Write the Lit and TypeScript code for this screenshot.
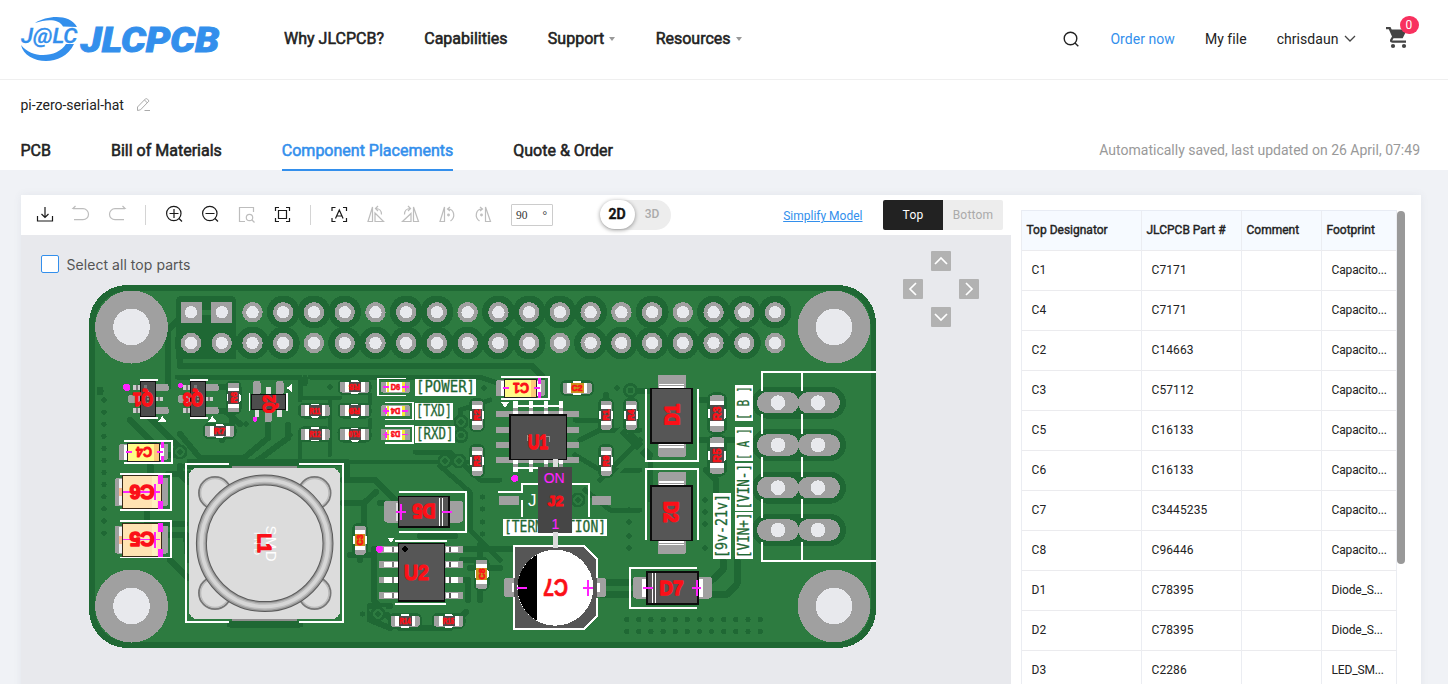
import { LitElement, html, svg, css } from "lit";
import { customElement } from "lit/decorators.js";

const DARK = "#1f6834";
const COPPER = "#2d7b40";
const PAD = "#a0a0a0";
const MAG = "#ff22ff";

const range = (n: number) => Array.from({ length: n }, (_, i) => i);

const label = (x: number, y: number, t: string, size: number, rot = 0, w?: number, weight = 0.8) => svg`
  <text class="ref" transform="translate(${x} ${y}) rotate(${rot})" y=${size * 0.36} font-size=${size}
    stroke-width=${weight} textLength=${w ?? size * 0.65 * t.length} lengthAdjust="spacingAndGlyphs">${t}</text>`;

const rect = (x: number, y: number, w: number, h: number, fill: string, r = 0) =>
  svg`<rect x=${x} y=${y} width=${w} height=${h} rx=${r} fill=${fill}></rect>`;

const silk = (d: string, w = 1.8) => svg`<path d=${d} fill="none" stroke="#fff" stroke-width=${w}></path>`;
const mag = (d: string, w = 1.8) => svg`<path d=${d} fill="none" stroke=${MAG} stroke-width=${w}></path>`;
const dark = (d: string, w = 6) => svg`<path d=${d} fill="none" stroke=${DARK} stroke-width=${w} stroke-linejoin="round" stroke-linecap="round"></path>`;
const light = (d: string, w = 4) => svg`<path d=${d} fill="none" stroke=${COPPER} stroke-width=${w} stroke-linejoin="round" stroke-linecap="round"></path>`;

const chip = (x: number, y: number, t: string, vertical = false, body = "#4c4c4c", flip = false, k = 1) => svg`
  <g transform="translate(${x} ${y}) rotate(${vertical ? -90 : 0}) scale(${k})">
    ${rect(-17, -8, 34, 16, DARK, 6)}
    ${rect(-14.5, -5.5, 29, 11, PAD, 1.5)}
    ${rect(-4, -7, 8, 14, "#fff", 1)}
    ${rect(-10, -5.3, 20, 10.6, "#fff")}
    ${rect(-6, -5.3, 12.5, 10.6, body)}
    ${label(0, 0, t, 8.5, flip ? 180 : 0, 11, 0.6)}
  </g>`;

const led = (y: number, t: string, swap: boolean) => svg`
  ${rect(381, y - 5.5, 29, 11, PAD, 1.5)}
  ${rect(386, y - 5, 19, 10, "#fff")}
  ${rect(386.5, y - 5, 2.5, 10, "#f4ea3a")}${rect(402, y - 5, 2.5, 10, "#f4ea3a")}
  ${label(395.5, y, t, 8.5, swap ? 180 : 0, 9.5, 0.6)}
  ${swap
    ? mag(`M383 ${y}h6M386 ${y - 3}v6M402 ${y}h6`)
    : mag(`M383 ${y}h6M402 ${y}h7M405.5 ${y - 3.5}v7`)}`;

const tag = (x: number, y: number, w: number, h: number, t: string) => svg`
  ${rect(x, y, w, h, "#fff")}
  <text class="silk-text" x=${x + 1} y=${y + 13.3} textLength=${w - 2} lengthAdjust="spacingAndGlyphs">${t}</text>`;

const vtag = (x: number, y: number, w: number, h: number, t: string) => svg`
  ${rect(x, y, w, h, "#fff")}
  <text class="silk-text" transform="translate(${x + w - 4} ${y + h - 1}) rotate(-90)" textLength=${h - 2} lengthAdjust="spacingAndGlyphs">${t}</text>`;

const tantalum = (y: number, t: string) => svg`
  ${silk(`M119.5 ${y - 18.2}H171.3V${y + 18}H119.5`)}
  ${rect(115, y - 14, 53, 28, PAD, 2)}
  ${rect(119, y - 13, 4, 26, "#f0f0f0")}${rect(119, y - 4, 3, 8, "#fbb98f")}
  <rect x="122.5" y=${y - 16.5} width="38.5" height="33" fill="#ffe3b3" stroke="#3a2a18"></rect>
  ${rect(152, y - 16, 5, 32, "#fff0bf")}
  ${mag(`M123 ${y}H160M155 ${y - 8}v16`, 1.6)}
  ${rect(158, y - 17, 5, 9, MAG)}${rect(158, y + 9, 5, 8, MAG)}
  ${label(142, y, t, 20, 180, 25, 1.6)}`;

const ceramic = (x: number, y: number, t: string) => svg`
  ${silk(`M${x - 20} ${y - 11}H${x + 28.5}V${y + 11.3}H${x - 20}`)}
  ${rect(x - 24.5, y - 8, 49, 16, PAD, 2)}
  ${rect(x - 20, y - 7.5, 40, 15, "#fff")}
  <rect x=${x - 16} y=${y - 9} width="32" height="18.5" fill="#fffb88" stroke="#222"></rect>
  ${rect(x + 10.5, y - 8.5, 5, 17.5, "#fdc87a")}
  ${mag(`M${x - 18} ${y}h6M${x + 13} ${y}h6`, 1.5)}
  ${rect(x + 17, y - 10, 3, 6, MAG)}${rect(x + 17, y + 4, 3, 6, MAG)}
  ${label(x + 0.5, y, t, 14, 180, 16, 0.9)}`;

const sot = (x: number, t: string) => svg`
  ${rect(x + 6, 384, 14.5, 7, PAD, 1.5)}${rect(x + 6, 407, 14.5, 7, PAD, 1.5)}${rect(x - 20, 395, 14, 8, PAD, 3)}
  ${rect(x - 15, 385, 7, 5, "#ccc")}${rect(x - 15, 408, 7, 5, "#ccc")}${rect(x + 8, 397, 7, 4, "#ccc")}
  ${rect(x - 12, 385, 2, 5, "#777")}${rect(x - 12, 408, 2, 5, "#777")}${rect(x + 10, 397, 2, 4, "#777")}
  ${silk(`M${x - 8} 379.8h17.5M${x - 8} 417.8h17.5`)}
  <rect x=${x - 7.5} y="381.5" width="15" height="34.5" fill="#4d4d4d" stroke="#111"></rect>
  <path d="M${x} 391v18" stroke="#888" stroke-dasharray="2 1.5" stroke-width="2"></path>
  ${rect(x - 4, 385, 3, 3, "#777")}
  ${label(x - 5, 399.5, t, 18, 180, 20, 1.6)}`;

const diodeV = (y: number, t: string, rot: number) => svg`
  ${rect(658, y - 41, 28, 82, PAD, 2)}${rect(659, y - 32, 25, 64, "#fff")}
  <path d="M659 ${y - 30}h25M659 ${y + 30}h25" stroke="#999"></path>
  <rect x="651.2" y=${y - 27} width="41" height="54.5" fill="#565656" stroke="#0c0c0c" stroke-width="1.5"></rect>
  ${label(671.5, y - 1, t, 20, rot, 21, 1.8)}`;

const HOLES = [[131.5, 327], [131.5, 606], [834, 327], [834, 606]];
const PX = (i: number) => 191 + i * 30.74;
const RING_TOP = [3, 4, 5, 7, 8, 10, 11, 12, 13, 15, 17, 18, 19];
const RING_BOTTOM = [0, 1, 2, 3, 5, 6, 7, 8, 9, 10, 11, 13, 14, 15, 16, 17, 18];
const TERMINALS = [402.7, 445, 487.7, 530];
const VIAS: number[][] = [
  ...range(12).map((i) => [104, 400 + i * 12.1]),
  ...range(12).map((i) => [626.7 + i * 12.13, 619.5]),
  ...range(12).map((i) => [626.7 + i * 12.13, 631.5]),
  [705, 500], [705, 512], [705, 524], [705, 548],
  [629, 510], [629, 522], [629, 536], [629, 548],
  [482.7, 497], [482.7, 509], [482.7, 522], [482.7, 534],
  [181, 434], [246, 424], [290, 435], [330, 387], [484, 388], [617, 388], [362.5, 614],
];
const RINGS = [[180, 452], [630.5, 390.5], [461, 422], [461, 435.7], [445, 461], [459, 461], [378, 614], [578, 500]];
const LOBES = [[215, 493], [314.5, 493], [215, 593], [314.5, 593]];

const board = () => svg`
<svg class="board" viewBox="21 235 990 449" width="990" height="449" shape-rendering="crispEdges">
  <rect x="89" y="285" width="787" height="363" rx="38" fill=${DARK}></rect>
  <rect x="95" y="291" width="775.5" height="351" rx="33" fill=${COPPER}></rect>

  ${rect(176, 296, 60, 66, DARK, 5)}
  ${RING_TOP.map((i) => svg`<circle cx=${PX(i)} cy="312" r="16.5" fill=${DARK}></circle>`)}
  ${RING_BOTTOM.map((i) => svg`<circle cx=${PX(i)} cy="343" r="16.5" fill=${DARK}></circle>`)}
  ${light("M192 312H222", 5)}
  ${light("M184 361H380", 4)}
  ${dark("M168 380V330L178 320M180 330V366H532L542 376V384")}
  ${dark("M177 377H300V400M305 377V384M310 377H480L500 384", 5)}
  ${dark("M168 378V387H140M150 410V418L178 446V455H152M206 387H228M206 411H225L240 424")}
  ${dark("M130 420L160 450M232 412V425L222 440M268 425V438L244 458H200L180 434M288 425V438L250 466H186")}
  ${dark("M300 440V462H480M330 400V455M370 395V404M370 420V428M302 398H340", 4)}
  ${dark("M415 452L450 452 480 480H500M440 466L470 492V530L500 560M460 440V410L490 400", 5)}
  ${dark("M343 503H364L376 492M364 503V530M380 503H384M370 555H350M360 560V548M384 549H374V600L384 612 400 628H450L466 612")}
  ${dark("M445 549H520M462 560H480M462 580H468V600M390 606H370V620L390 628")}
  ${dark("M343 480L375 480 400 505M420 536L455 536M500 568H470M480 545V600")}
  ${dark("M575 420H600M580 440L600 430H640M575 455L600 470 640 470M620 430L650 460V500M585 490L610 510H640M600 480L640 440", 5)}
  ${dark("M606 395V430M631 395V435L650 455M631 391H650M700 400H716M700 440H735M706 470L716 480V495")}
  ${dark("M600 582H632M600 594H632M712 580L723 570V560M712 594H728L737 584V560", 7)}
  ${dark("M180 466V474L188 482M168 474H190M147 512V524H185M170 535H186L188 560M170 560L188 578", 6)}
  ${dark("M150 465V475M100 390V392M230 624H300M190 462H346V480", 7)}
  ${light("M370 610H450L458 622M385 608H378", 3)}
  ${light("M560 400V390M600 450L640 410M610 480L645 445", 3)}
  ${VIAS.map(([x, y]) => svg`<circle cx=${x} cy=${y} r="2.6" fill=${DARK}></circle>`)}
  ${RINGS.map(([x, y]) => svg`
    <circle cx=${x} cy=${y} r="7.5" fill=${DARK}></circle><circle cx=${x} cy=${y} r="4.8" fill=${COPPER}></circle><circle cx=${x} cy=${y} r="2.8" fill=${DARK}></circle>`)}

  ${rect(180.5, 302, 21, 21, PAD)}${rect(211, 302, 21, 21, PAD)}
  ${range(20).map((i) => svg`
    <circle cx=${PX(i)} cy="312.3" r="10.2" fill=${PAD}></circle><circle cx=${PX(i)} cy="312.3" r="6.2" fill="#e8e9ed"></circle>
    <circle cx=${PX(i)} cy="343" r="10.2" fill=${PAD}></circle><circle cx=${PX(i)} cy="343" r="6.2" fill="#e8e9ed"></circle>`)}
  ${HOLES.map(([x, y]) => svg`<circle cx=${x} cy=${y} r="36.5" fill=${PAD}></circle><circle cx=${x} cy=${y} r="18.3" fill="#e8e9ed"></circle>`)}

  ${TERMINALS.map((y) => svg`
    ${rect(752, y - 16, 94, 32, DARK, 16)}
    ${rect(757, y - 10.7, 42, 21.4, PAD, 10.7)}${rect(798, y - 10.7, 42, 21.4, PAD, 10.7)}
    <circle cx="778" cy=${y} r="7.3" fill="#e8e9ed"></circle><circle cx="818" cy=${y} r="7.3" fill="#e8e9ed"></circle>`)}
  ${silk("M876 372H762V391M762 414v19.500M762 457v19.500M762 499v18.500M762 542V561H876M802 372v19M802 414v19.500M802 457v19.500M802 499v18.500M802 542v18.500", 2)}

  ${sot(148, "Q1")}${sot(198, "Q3")}
  <circle cx="126.700" cy="387.300" r="3.600" fill=${MAG}></circle><circle cx="180.500" cy="385.600" r="2.600" fill=${MAG}></circle>
  <path d="M158 422l4.300-6 4.300 6zM208 422l4.300-6 4.300 6zM292 384v8l-5.500-4z" fill="#fff"></path>
  ${rect(253, 381, 7.5, 14, PAD, 2)}${rect(276, 381, 7.5, 14, PAD, 2)}${rect(265, 409, 7, 13, PAD, 2)}
  ${rect(266, 387, 5, 7, "#ddd")}${rect(255, 410, 4, 7, "#ddd")}${rect(277, 410, 5, 7, "#ddd")}
  <rect x="251.500" y="394.500" width="34" height="15" fill="#4d4d4d" stroke="#111"></rect>
  ${silk("M249.700 393v18M287 393v18", 1.5)}
  ${label(269, 404, "Q2", 16, -90, 18, 1.5)}
  <circle cx="255" cy="419.300" r="2.500" fill=${MAG}></circle>

  ${chip(219.5, 431, "R7")}${chip(233.5, 397.5, "R6", true)}
  ${chip(315, 410.6, "R11")}${chip(315, 434.3, "R12")}
  ${chip(354.500, 387, "R8", false, "#4c4c4c", true)}${chip(354.500, 410.600, "R9", false, "#4c4c4c", true)}${chip(354.500, 434.500, "R10", false, "#4c4c4c", true)}
  ${chip(405, 621, "R14")}${chip(448.500, 621, "R15")}
  ${chip(577, 388, "C2", false, "#c8921e")}
  ${chip(477, 415, "R2", true)}${chip(477, 461, "R3", true)}${chip(606, 415, "R1", true)}${chip(606, 461, "R9", true)}${chip(631, 415, "R4", true)}
  ${chip(360, 540, "C3", true, "#c8921e")}${chip(481.500, 574, "C8", true, "#c8921e")}
  ${chip(717, 413.500, "R3", true, "#4c4c4c", false, 1.25)}${chip(717, 455.500, "R5", true, "#4c4c4c", false, 1.25)}

  ${silk("M406 378.500H378V395.500H406M385 402.500H413V419.500H385M385 426.300H413V443H385")}
  ${led(387, "D6", false)}${led(410.8, "D4", true)}${led(434.5, "D3", true)}
  ${tag(415, 379, 61, 17, "[POWER]")}${tag(415, 402.5, 38, 17, "[TXD]")}${tag(415, 426, 39.5, 17, "[RXD]")}

  ${ceramic(520.500, 388, "C1")}${ceramic(143.500, 452, "C4")}
  ${tantalum(492, "C6")}${tantalum(539.500, "C5")}

  <g>
    ${silk("M229 464.300H186.300V622H229M299 464.300H343V622H299")}
    ${rect(232, 466, 65, 155, "#8f8f8f")}
    ${rect(189, 468, 151, 151, "#dcdcdc", 8)}
    <g shape-rendering="auto">
      <g fill="#dcdcdc" stroke="#777" stroke-width="2">
        ${LOBES.map(([x, y]) => svg`<circle cx=${x} cy=${y} r="16"></circle>`)}
      </g>
      <g fill="#dcdcdc" stroke="#bbb" stroke-width="1.500">
        ${LOBES.map(([x, y]) => svg`<circle cx=${x} cy=${y} r="14.500"></circle>`)}
      </g>
      <circle cx="264.700" cy="543.300" r="63.300" fill="#dcdcdc" stroke="#5a5a5a" stroke-width="11"></circle>
      <circle cx="264.700" cy="543.300" r="63.300" fill="none" stroke="#999" stroke-width="9"></circle>
      <circle cx="264.700" cy="543.300" r="63.300" fill="none" stroke="#bcbcbc" stroke-width="6.500"></circle>
      <circle cx="264.700" cy="543.300" r="63.300" fill="none" stroke="#d6d6d6" stroke-width="3.500"></circle>
    </g>
    <text class="mark" transform="translate(266 525.500) rotate(90)" font-size="15" textLength="36">SMD</text>
    <text class="mark" transform="translate(254 532) rotate(90)" font-size="9" textLength="23">IND</text>
    ${label(264.5, 543, "L1", 19, 90, 19, 1.6)}
  </g>

  ${silk("M398.500 492H466.200V531.800H398.500")}
  ${rect(384, 501, 79, 21.5, PAD, 3)}${rect(396, 503, 54, 18, "#ddd")}
  <rect x="398.700" y="496.700" width="50.500" height="30.500" fill="#555" stroke="#0c0c0c" stroke-width="1.500"></rect>
  ${silk("M439.700 498v28M442.800 498v28", 1.2)}
  ${mag("M396 512h10M400.700 504v16M442 512h10", 2)}
  ${label(424, 511.5, "D5", 20, 180, 23, 1.6)}

  <path d="M387 537.500h8l-4 5z" fill="#fff"></path>
  ${silk("M395 541H447M395 603.800H446")}
  ${[549.5, 564.5, 580, 595.5].map((y) => svg`
    ${rect(379, y - 3.2, 19, 6.4, PAD)}${rect(384, y - 2.7, 14, 5.4, "#fff")}${rect(392, y - 2.7, 2, 5.4, "#777")}
    ${rect(445, y - 3.2, 18, 6.4, PAD)}${rect(446, y - 2.7, 12, 5.4, "#fff")}${rect(448.5, y - 2.7, 2, 5.4, "#555")}`)}
  <rect x="398.700" y="543.700" width="45.800" height="57.500" fill="#565656" stroke="#0c0c0c" stroke-width="1.500"></rect>
  <circle cx="405" cy="549" r="2.800" fill="#000"></circle><circle cx="379.500" cy="549.300" r="3.500" fill=${MAG}></circle>
  ${label(416.5, 572, "U2", 22, 0, 25, 1.2)}

  ${silk("M515 406H562M515 467.700H545")}
  <path d="M501 402h8l-4 6z" fill="#fff"></path>
  ${[413.5, 429.5, 444.7, 460].map((y) => svg`${rect(496, y - 3, 83, 6.2, PAD)}`)}
  ${[515, 530.5, 545.5, 560.5].map((x) => svg`${rect(x - 2, 401, 4.5, 13, "#fff")}${rect(x - 2, 460, 4.5, 12, "#fff")}${rect(x - 2, 408, 4.5, 3, "#999")}${rect(x - 2, 464, 4.5, 3, "#999")}`)}
  <rect x="510" y="415" width="56.500" height="44.500" fill="#505050" stroke="#0c0c0c" stroke-width="1.500"></rect>
  <path d="M527 435v6M527 436h3M546 436h3v6" fill="none" stroke="#999"></path>
  ${label(538, 441.500, "U1", 21, 0, 20, 1.500)}
  <circle cx="514.700" cy="478.500" r="3.400" fill=${MAG}></circle>

  ${rect(499, 496, 20, 9, PAD)}${rect(592, 496, 19, 9, PAD)}
  ${silk("M498 492H522V484H589.300V517M522 500V517", 1.7)}
  <text class="mark" x="528" y="506" font-size="17">J</text>
  ${rect(503, 518.5, 104, 17.5, "#fff")}
  <text class="silk-text" x="504" y="532" textLength="39" lengthAdjust="spacingAndGlyphs">[TERM</text>
  <text class="silk-text" x="567" y="532" textLength="39" lengthAdjust="spacingAndGlyphs">TION]</text>
  ${rect(553.3, 459, 4.800, 90, "#dcdcdc")}
  ${rect(538, 467, 34, 65.5, "#464646")}
  <text class="pin" x="554.200" y="483" font-size="14" text-anchor="middle">ON</text>
  <text class="pin" x="555.500" y="529" font-size="14" text-anchor="middle">1</text>
  ${label(555.5, 500.500, "J2", 15, 0, 16, 1)}

  ${rect(504, 578, 102, 19, PAD, 3)}${rect(512, 583, 88, 9, "#fff")}
  <path d="M514 546H584.300L597 559V616L584.300 629H514z" fill="#565656"></path>
  ${silk("M514 578V546.300H584.300L597 559V578M597 598V616L584.300 629H514V597")}
  ${rect(553.3, 532, 4.800, 16, "#dcdcdc")}
  <circle cx="555.300" cy="587.700" r="38" fill="#fff"></circle>
  <path d="M536.700 555A37.500 37.500 0 0 0 536.700 620.400z" fill="#000"></path>
  ${mag("M517 588h10M583 588h10M588 580v16", 1.8)}
  ${label(555.500, 587.500, "C7", 23, 180, 25, 0.6)}

  ${silk("M697 568H629.800V608H697")}
  ${rect(633, 577, 79, 21.500, PAD, 3)}${rect(642, 579, 61, 18, "#fff")}
  <rect x="647" y="572" width="51" height="31.800" fill="#555" stroke="#0c0c0c" stroke-width="1.500"></rect>
  ${silk("M652.700 573v30M655.700 573v30", 1.2)}
  ${mag("M643 588h10M692 588h9M696.600 580v16", 2)}
  ${label(671.500, 587.500, "D7", 21, 0, 24, 1.600)}

  ${silk("M646 389V461H698V389M646 540V468.700H698V540")}
  ${diodeV(415.7, "D1", -90)}${diodeV(513, "D2", 90)}

  ${vtag(735, 385, 18, 36, "[ B ]")}${vtag(735, 427, 18, 34, "[ A ]")}
  ${vtag(735, 463, 18, 47.500, "[VIN-]")}${vtag(735, 511.500, 18, 47.500, "[VIN+]")}${vtag(713, 493, 18, 66, "[9v-21v]")}
</svg>`;

const tool = (content: unknown, muted = false) => html`
  <button class="tool ${muted ? "muted" : ""}"><svg width="36" height="40" viewBox="0 0 36 40">${content}</svg></button>`;

const CHEVRONS = {
  up: "M4 13L10 7L16 13", left: "M13 4L7 10L13 16", right: "M7 4L13 10L7 16", down: "M4 7L10 13L16 7",
};

const ROWS: [string, string, string][] = [
  ["C1", "C7171", "Capacito..."], ["C4", "C7171", "Capacito..."], ["C2", "C14663", "Capacito..."],
  ["C3", "C57112", "Capacito..."], ["C5", "C16133", "Capacito..."], ["C6", "C16133", "Capacito..."],
  ["C7", "C3445235", "Capacito..."], ["C8", "C96446", "Capacito..."], ["D1", "C78395", "Diode_S..."],
  ["D2", "C78395", "Diode_S..."], ["D3", "C2286", "LED_SM..."],
];

@customElement("app-root")
export class AppRoot extends LitElement {
  static styles = css`
    :host { display: block; height: 684px; overflow: hidden; background: #f0f2f6; font-family: Roboto, sans-serif; color: #222; font-size: 14px; }
    * { box-sizing: border-box; }
    button { border: 0; background: none; padding: 0; font: inherit; }
    svg { display: block; }
    header { height: 80px; background: #fff; border-bottom: 1px solid #efefef; display: flex; align-items: center; padding: 0 29px 2px 20px; }
    .logo-art { font-family: Roboto, sans-serif; fill: #338fec; font-style: italic; }
    nav { display: flex; gap: 40.300px; margin-left: 62px; flex: 1; font-size: 16px; }
    .bold { -webkit-text-stroke: 0.55px currentColor; }
    nav a { display: flex; align-items: center; gap: 5px; line-height: 20px; }
    .caret { border: 3.500px solid transparent; border-top: 4px solid #999; border-bottom: 0; }
    .account { display: flex; align-items: center; gap: 30px; letter-spacing: 0.050px; }
    .blue { color: #338fec; }
    .user { display: flex; align-items: center; gap: 5px; margin-right: 0.500px; }
    .cart { position: relative; width: 33px; height: 36px; }
    .badge { position: absolute; left: 13.500px; top: -5px; width: 19px; height: 18px; border-radius: 9px; background: #f8315f; color: #fff; font-size: 12px; line-height: 18px; text-align: center; }
    .project { background: #fff; height: 90px; padding: 0 28px 0 20.500px; display: flex; flex-direction: column; justify-content: space-between; }
    .name { display: flex; align-items: center; gap: 12.500px; height: 50px; }
    .tabs { display: flex; height: 41px; margin-bottom: -1px; gap: 60px; font-size: 16px; line-height: 42px; }
    .tabs .active { color: #338fec; border-bottom: 2px solid #338fec; }
    .saved { margin-left: auto; color: #999; font-size: 14px; line-height: 41px; }
    main { margin: 25px 27px 0 21px; display: flex; background: #fff; height: 520px; box-shadow: 0 0 8px rgba(80,90,120,.08); }
    .editor { width: 990px; display: flex; flex-direction: column; }
    .toolbar { display: flex; height: 40px; align-items: center; padding-left: 6px; }
    .tool { width: 36px; height: 40px; color: #1a1a1a; }
    .tool svg { fill: none; stroke: currentColor; stroke-width: 1.200; }
    .muted { color: #bdbdbd; }
    .sep { width: 1px; height: 20px; background: #d4d4d4; margin: 0 10px; }
    .angle { width: 42px; height: 22px; border: 1px solid #ccc; border-radius: 1px; margin-left: 10px; display: flex; justify-content: space-between; padding: 0 5px 0 4px; font: 11.500px/20px "Liberation Serif", serif; color: #333; }
    .modes { display: flex; width: 71px; height: 30px; margin-left: 46.500px; border-radius: 15px; background: #ededed; color: #aaa; font-weight: 500; font-size: 12px; line-height: 29px; }
    .modes span { width: 35px; text-align: center; }
    .modes .on { background: #fff; color: #111; font-size: 14px; height: 29px; border-radius: 15px; box-shadow: 0 1px 4px rgba(0,0,0,.4); }
    .simplify { margin-left: auto; font-size: 12px; text-decoration: underline; padding-top: 2px; }
    .sides { display: flex; margin: 0 8px 0 20.500px; border-radius: 2px; overflow: hidden; font-size: 12px; line-height: 30px; text-align: center; letter-spacing: 0.200px; }
    .sides span { width: 60px; background: #ededed; color: #aaa; }
    .sides .on { background: #222; color: #fff; }
    .canvas { position: relative; height: 449px; background: #e8e9ed; }
    .select { position: absolute; left: 20px; top: 20px; display: flex; align-items: flex-start; gap: 7.500px; font: 14px/20px Inter, sans-serif; color: #555; }
    .select span { letter-spacing: 0.050px; }
    .box { width: 18px; height: 18px; border: 1px solid #338fec; border-radius: 2px; background: #fff; }
    .pan { position: absolute; left: 882px; top: 16px; display: grid; grid-template-columns: repeat(3, 20px); grid-template-rows: repeat(3, 20px); gap: 8px; }
    .pan button { background: #b2b2b2; border-radius: 1px; }
    .pan svg { fill: none; stroke: #fff; stroke-width: 1.700; }
    .up { grid-area: 1 / 2; } .left { grid-area: 2 / 1; } .right { grid-area: 2 / 3; } .down { grid-area: 3 / 2; }
    .ref { font-family: "Liberation Sans", sans-serif; font-weight: 700; fill: #fb1018; stroke: #fb1018; stroke-linejoin: round; text-anchor: middle; }
    .silk-text { font-family: "DejaVu Sans Mono", monospace; font-size: 15px; fill: #1f6834; stroke: #1f6834; stroke-width: .3; }
    .mark { font-family: "Liberation Sans", sans-serif; fill: #fff; }
    .pin { font-family: "Liberation Sans", sans-serif; fill: #ff22ff; stroke: #ff22ff; stroke-width: .1; }
    .parts { padding: 15px 0 0 10px; display: flex; font-size: 12px; }
    .table { width: 376px; }
    .row { display: grid; grid-template-columns: 120px 100px 80px 75px; height: 40px; border-left: 1px solid #ebedf2; }
    .row span { border-right: 1px solid #ebedf2; border-bottom: 1px solid #ebebee; padding-left: 9.500px; line-height: 39px; letter-spacing: 0.100px; }
    .row .footprint { letter-spacing: -0.150px; }
    .head { border-top: 1px solid #e8ecf4; background: #f6faff; height: 41px; }
    .head .cell { padding-left: 4.500px; letter-spacing: 0; -webkit-text-stroke: 0.4px currentColor; }
    .thumb { width: 8px; height: 353px; margin-top: 1px; border-radius: 4px; background: #999; }
  `;

  render() {
    return html`
      <header>
        <svg class="logo-art" width="202" height="52" viewBox="20 13 202 52">
          <path d="M35 23C48 15 70 14 77 27L63 26.500C59 18.500 46 19 35 23z"></path>
          <path d="M21 45C25 64 62 69 74 44L66 44C58 57 33 60 21 45z"></path>
          <text x="21" y="43" font-size="21" font-weight="500" textLength="56.500" lengthAdjust="spacingAndGlyphs" stroke="#338fec" stroke-width=".3">J@LC</text>
          <text x="80.500" y="51.500" font-size="34.500" font-weight="900" textLength="139" lengthAdjust="spacingAndGlyphs" stroke="#338fec" stroke-width=".9">JLCPCB</text>
        </svg>
        <nav class="bold">
          <a>Why JLCPCB?</a><a>Capabilities</a><a>Support <i class="caret"></i></a><a>Resources <i class="caret"></i></a>
        </nav>
        <div class="account">
          <svg width="18" height="18" viewBox="0 0 18 18" fill="none" stroke="#222" stroke-width="1.400"><circle cx="8.500" cy="8.500" r="6.300"></circle><path d="M13 13l3.300 3.300"></path></svg>
          <span class="blue">Order now</span><span>My file</span>
          <span class="user">chrisdaun <svg width="12" height="8" viewBox="0 0 12 8" fill="none" stroke="#444" stroke-width="1.300"><path d="M1 1l5 5 5-5"></path></svg></span>
          <span class="cart">
            <svg width="31" height="36" viewBox="0 0 31 36" fill="#444"><path d="M0 6h4.500l1.200 2.500H21l-4.300 8.700H7.500L6.200 19.500H20v2.200H6.500C4 21.700 3.500 19.500 4.500 18L6 15.500 2.800 8.200H0z"></path><circle cx="7" cy="25" r="2.100"></circle><circle cx="18" cy="25" r="2.100"></circle></svg>
            <span class="badge">0</span>
          </span>
        </div>
      </header>
      <section class="project">
        <div class="name"><span>pi-zero-serial-hat</span>
          <svg width="16" height="16" viewBox="0 0 16 16" fill="none" stroke="#aaa"><path d="M1.500 13.500V10L9.500 1.800C10.500 1 12.800 2.800 12.800 4.200L4.500 12.800zM8.500 3l3 3M8.500 13.500H14"></path></svg>
        </div>
        <div class="tabs"><span class="bold">PCB</span><span class="bold">Bill of Materials</span><span class="bold active">Component Placements</span><span class="bold">Quote &amp; Order</span>
          <span class="saved">Automatically saved, last updated on 26 April, 07:49</span></div>
      </section>
      <main>
        <section class="editor">
          <div class="toolbar">
            ${tool(svg`<path d="M18 12v10M14.500 19l3.500 3.500 3.500-3.500M10.500 21v5h15v-5"></path>`)}
            ${tool(svg`<path d="M14 13.500h-4l2.500-2.500M10 13.700H20a5.500 5.500 0 0 1 0 11H11"></path>`, true)}
            ${tool(svg`<path d="M22 13.500h4l-2.500-2.500M26 13.700H16a5.500 5.500 0 0 0 0 11H25"></path>`, true)}
            <i class="sep"></i>
            ${tool(svg`<circle cx="17.800" cy="18.500" r="7.200"></circle><path d="M23 23.500l3 3M13.500 18.500h9M18 14v9"></path>`)}
            ${tool(svg`<circle cx="17.800" cy="18.500" r="7.200"></circle><path d="M23 23.500l3 3M13.500 18.500h9"></path>`)}
            ${tool(svg`<path d="M17 26.500H11.500V12.500H25.500V17"></path><circle cx="21.500" cy="22.500" r="3.200"></circle><path d="M24 25l2.500 2.500"></path>`, true)}
            ${tool(svg`<path d="M11.500 16v-3.500H15M22 12.500h3.500v3.500M25.500 23v3.500H22M15 26.500h-3.500V23M14.500 15.500h8v8h-8z"></path>`)}
            <i class="sep"></i>
            ${tool(svg`<path d="M11 16v-3.500h3.500M22 12.500h3.500v3.500M25.500 23v3.500H22M14.500 26.500H11v-3.500M14.500 23.500l3.800-8.500 3.800 8.500M15.700 21h5.200"></path>`)}
            ${tool(svg`<path d="M15.500 12v14.500h-4.500zM18 18v8.500h8.500zM18.500 13.500c4 0 6 2 6 6M21 11l-2.500 2.500L21 16"></path>`, true)}
            ${tool(svg`<path d="M20.500 12v14.500h5zM18 18.500v8H9.500zM17.500 13.500c-4 0-6 2-6 6M15 11l2.500 2.500L15 16"></path>`, true)}
            ${tool(svg`<path d="M15.500 12v14.500h-4.500zM19 14c6 0 8 8 2.500 12M21 12l-2.500 2 2.500 2"></path><circle cx="19.500" cy="20" r=".8"></circle>`, true)}
            ${tool(svg`<path d="M20.500 12v14.500h5zM17 14c-6 0-8 8-2.500 12M15 12l2.500 2-2.500 2"></path><circle cx="16.500" cy="20" r=".8"></circle>`, true)}
            <span class="angle"><span>90</span><span>°</span></span>
            <span class="modes"><span class="on bold">2D</span><span>3D</span></span>
            <span class="simplify blue">Simplify Model</span>
            <span class="sides"><span class="on">Top</span><span>Bottom</span></span>
          </div>
          <div class="canvas">
            ${board()}
            <label class="select"><i class="box"></i><span>Select all top parts</span></label>
            <div class="pan">
              ${Object.entries(CHEVRONS).map(([k, d]) => html`<button class=${k}><svg width="20" height="20"><path d=${d}></path></svg></button>`)}
            </div>
          </div>
        </section>
        <section class="parts">
          <div class="table">
            <div class="row head"><span class="cell">Top Designator</span><span class="cell">JLCPCB Part #</span><span class="cell">Comment</span><span class="cell">Footprint</span></div>
            ${ROWS.map(([d, p, f]) => html`<div class="row"><span>${d}</span><span>${p}</span><span></span><span class="footprint">${f}</span></div>`)}
          </div>
          <div class="thumb"></div>
        </section>
      </main>`;
  }
}
